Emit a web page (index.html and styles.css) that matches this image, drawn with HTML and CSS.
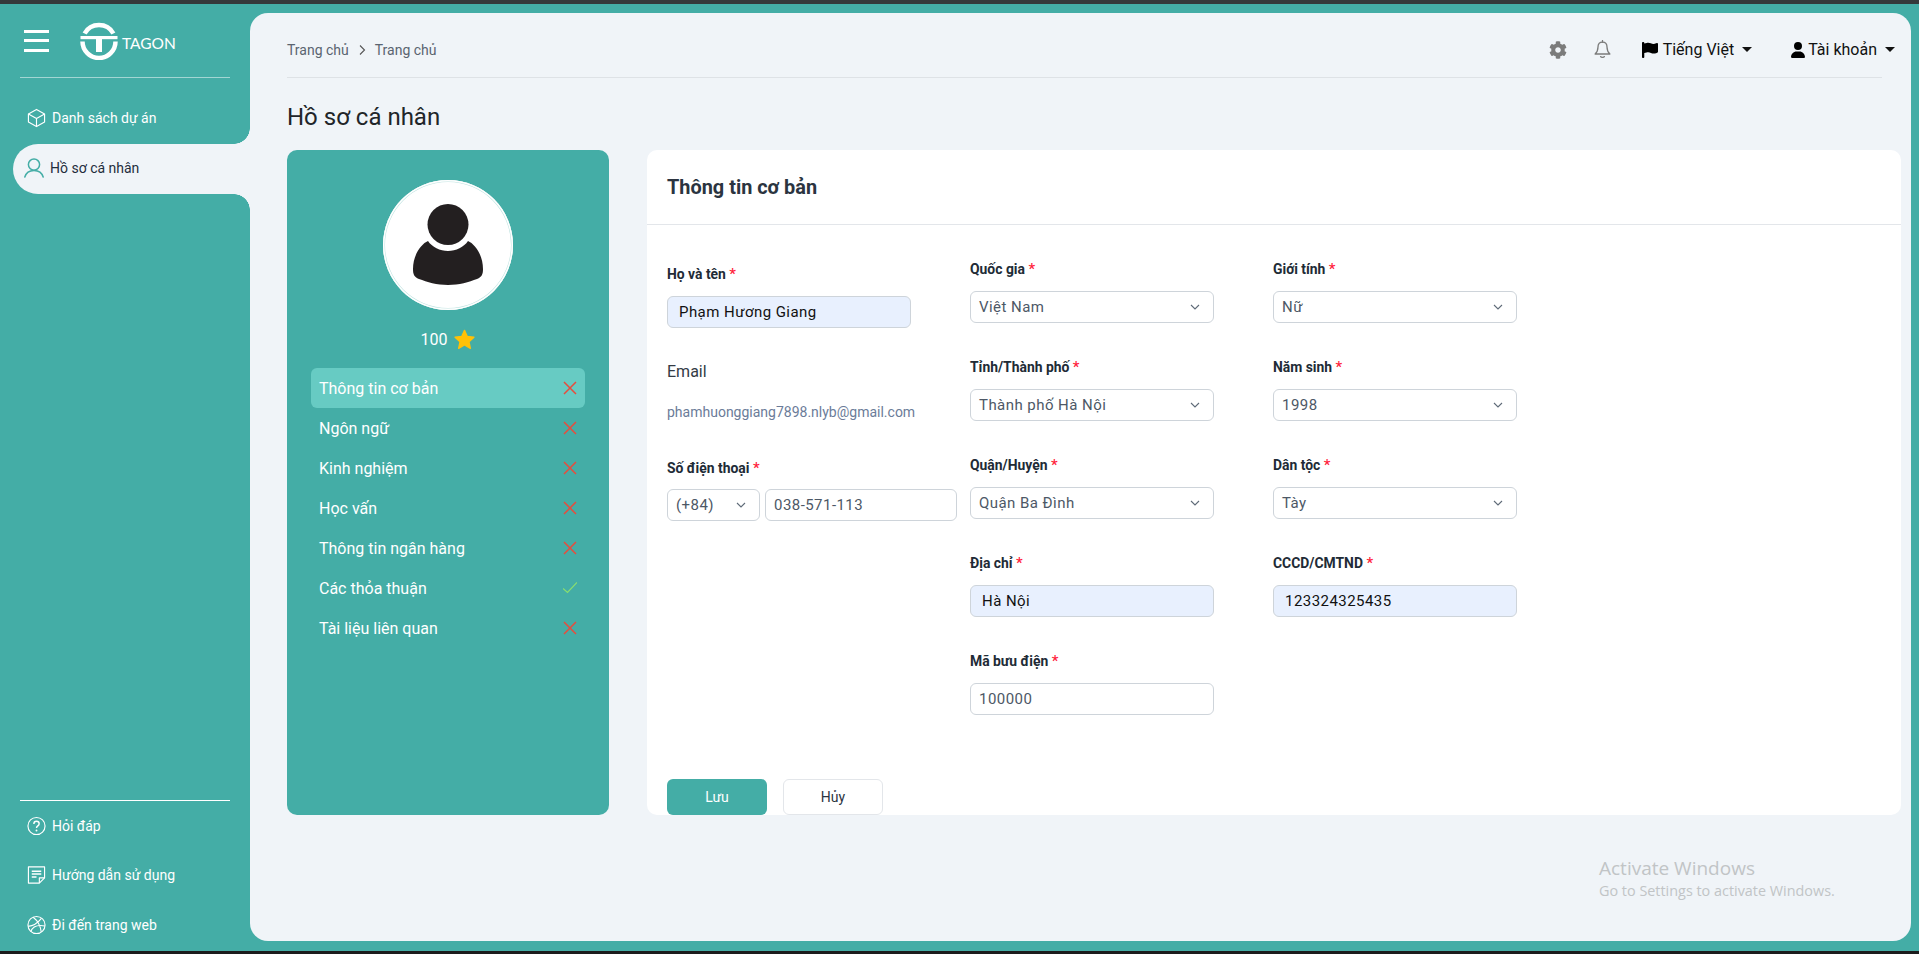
FILE: index.html
```html
<!DOCTYPE html>
<html lang="en">
<head>
    <meta charset="UTF-8">
    <meta name="viewport" content="width=device-width, initial-scale=1.0">
    <title>Hồ sơ cá nhân</title>
    <link rel="stylesheet" href="styles.css">
</head>
<body>
    <div class="app">
        <aside class="sidebar">
            <div class="brand">
                <div class="hamburger"><span></span><span></span><span></span></div>
                <svg class="logo" viewBox="0 0 38 38">
                    <path d="M4.6 11.500A16.500 16.500 0 0 1 33.400 11.500" fill="none" stroke="#fff" stroke-width="4.500"/>
                    <path d="M2.500 19.500A16.500 16.500 0 0 0 35.500 19.500" fill="none" stroke="#fff" stroke-width="4.500"/>
                    <rect x="0.500" y="14" width="37" height="3.200" fill="#fff"/>
                    <rect x="16" y="14" width="6" height="16" fill="#fff"/>
                </svg>
                <span class="logo-text">TAGON</span>
            </div>
            <nav class="nav">
                <a class="nav-item">
                    <svg class="nav-icon" viewBox="0 0 20 20" fill="none" stroke="#fff" stroke-width="1.200" stroke-linejoin="round"><path d="M10 1l8.500 4.800v8.400L10 19l-8.500-4.800V5.800z"/><path d="M1.500 5.800L10 10.500l8.500-4.700M10 10.500V19"/></svg>
                    Danh sách dự án
                </a>
                <a class="nav-item active">
                    <svg class="nav-icon" viewBox="0 0 20 20" fill="none" stroke="#44ada6" stroke-width="1.500" stroke-linecap="round"><circle cx="10" cy="6.600" r="5.600"/><path d="M.8 19c1.200-4.200 4.600-6.600 9.200-6.600s8 2.400 9.200 6.600"/></svg>
                    Hồ sơ cá nhân
                </a>
            </nav>
            <div class="nav-bottom">
                <a class="nav-item small">
                    <svg class="nav-icon" viewBox="0 0 20 20" fill="none" stroke="#fff" stroke-width="1.200"><circle cx="10" cy="10" r="9"/><path d="M7.200 7.800c0-1.700 1.200-2.800 2.800-2.800s2.800 1 2.800 2.600c0 2.300-2.800 2.300-2.800 4.600" stroke-width="1.500"/><circle cx="10" cy="14.800" r="1" fill="#fff" stroke="none"/></svg>
                    Hỏi đáp
                </a>
                <a class="nav-item small">
                    <svg class="nav-icon" viewBox="0 0 20 20" fill="none" stroke="#fff" stroke-width="1.200" stroke-linejoin="round"><path d="M1.500 1.500h17v11.500l-5.500 5.500H1.500z"/><path d="M18.500 13H13v5.500"/><path d="M5 6h10M5 9h10M5 12h5" stroke-width="1.600"/></svg>
                    Hướng dẫn sử dụng
                </a>
                <a class="nav-item small">
                    <svg class="nav-icon" viewBox="0 0 20 20" fill="none" stroke="#fff" stroke-width="1.200"><circle cx="10" cy="10" r="9"/><path d="M6.500 1.800c4 3 7.500 8 8.500 15.500M1.200 11.500c5-.5 10-3.500 14-8.500M4 17c1.500-4.500 6-7.500 14.800-6"/></svg>
                    Đi đến trang web
                </a>
            </div>
        </aside>

        <main class="main">
            <header class="topbar">
                <div class="breadcrumb">
                    <span>Trang chủ</span>
                    <svg class="crumb-sep" viewBox="0 0 8 12" fill="none" stroke="#555" stroke-width="1.100"><path d="M2 1.500L6.500 6 2 10.500"/></svg>
                    <span>Trang chủ</span>
                </div>
                <div class="top-actions">
                    <svg class="ic-gear" viewBox="0 0 512 512" fill="#7b7b7b"><path d="M487.4 315.7l-42.6-24.6c4.3-23.2 4.3-47 0-70.2l42.6-24.6c4.9-2.8 7.1-8.6 5.5-14-11.1-35.6-30-67.8-54.7-94.6-3.8-4.1-10-5.1-14.8-2.3L380.8 110c-17.9-15.4-38.5-27.3-60.8-35.1V25.8c0-5.6-3.9-10.5-9.4-11.7-36.7-8.2-74.3-7.8-109.2 0-5.5 1.2-9.4 6.1-9.4 11.7V75c-22.2 7.9-42.8 19.8-60.8 35.1L88.7 85.5c-4.9-2.8-11-1.9-14.8 2.3-24.7 26.7-43.6 58.9-54.7 94.6-1.7 5.4.6 11.2 5.5 14L67.3 221c-4.3 23.2-4.3 47 0 70.2l-42.6 24.6c-4.9 2.8-7.1 8.6-5.5 14 11.1 35.6 30 67.8 54.7 94.6 3.8 4.1 10 5.1 14.8 2.3l42.6-24.6c17.9 15.4 38.5 27.3 60.8 35.1v49.2c0 5.6 3.9 10.5 9.4 11.7 36.7 8.2 74.3 7.8 109.2 0 5.5-1.2 9.4-6.1 9.4-11.7v-49.2c22.2-7.9 42.8-19.8 60.8-35.1l42.6 24.6c4.9 2.8 11 1.9 14.8-2.3 24.7-26.7 43.6-58.9 54.7-94.6 1.5-5.5-.7-11.3-5.6-14.1zM256 336c-44.1 0-80-35.9-80-80s35.9-80 80-80 80 35.9 80 80-35.9 80-80 80z"/></svg>
                    <svg class="ic-bell" viewBox="0 0 18 20" fill="none" stroke="#7b7b7b" stroke-width="1.400" stroke-linejoin="round"><path d="M9 2.200c-3.200 0-4.800 2.400-4.800 5.300 0 3.800-1.200 5.600-3 7.300h15.600c-1.800-1.700-3-3.500-3-7.300 0-2.900-1.600-5.300-4.800-5.300z"/><path d="M9 .5v1.700M7 17.500c.5 1.200 3.500 1.200 4 0" stroke-linecap="round"/></svg>
                    <div class="top-menu lang">
                        <svg class="ic-flag" viewBox="0 0 448 512" preserveAspectRatio="none"><path d="M64 32C64 14.300 49.700 0 32 0S0 14.300 0 32V64 368 480c0 17.700 14.300 32 32 32s32-14.300 32-32V352l64.300-16.100c41.100-10.300 84.600-5.500 122.500 13.400c44.200 22.100 95.500 24.800 141.700 7.400l34.700-13c12.500-4.700 20.800-16.600 20.800-30V66.100c0-23-24.200-38-44.800-27.700l-9.600 4.800c-46.300 23.200-100.800 23.200-147.100 0c-35.100-17.600-75.400-22-113.500-12.500L64 48V32z"/></svg>
                        <span>Tiếng Việt</span>
                        <i class="caret"></i>
                    </div>
                    <div class="top-menu account">
                        <svg class="ic-user" viewBox="0 0 448 512"><path d="M224 256A128 128 0 1 0 224 0a128 128 0 1 0 0 256zm-45.700 48C79.800 304 0 383.800 0 482.300C0 498.700 13.300 512 29.700 512H418.300c16.400 0 29.700-13.300 29.700-29.700C448 383.800 368.200 304 269.700 304H178.300z"/></svg>
                        <span>Tài khoản</span>
                        <i class="caret"></i>
                    </div>
                </div>
            </header>

            <h1 class="page-title">Hồ sơ cá nhân</h1>

            <div class="content">
                <section class="profile-card">
                    <div class="avatar">
                        <svg viewBox="0 0 70 82" class="avatar-img">
                            <circle cx="35" cy="20.500" r="20.500" fill="#231f20"/>
                            <path d="M15 37c4 6 12 10 20 10s16-4 20-10c7 3 15 14 15 28 0 5-1 8-6 10-8 3-18 6-29 6s-21-3-29-6c-5-2-6-5-6-10C0 51 8 40 15 37z" fill="#231f20"/>
                        </svg>
                    </div>
                    <div class="score">
                        <span>100</span>
                        <svg class="star" viewBox="0 0 24 24"><path d="M12 1.500l3.200 7 7.600.9-5.600 5.200 1.500 7.500L12 18.300l-6.700 3.800 1.500-7.500L1.200 9.400l7.600-.9z" fill="#ffc107" stroke="#ffc107" stroke-width="1.500" stroke-linejoin="round"/></svg>
                    </div>
                    <ul class="steps">
                        <li class="step current">Thông tin cơ bản <svg class="mark" viewBox="0 0 14 14"><path d="M1 1l12 12M13 1L1 13"/></svg></li>
                        <li class="step">Ngôn ngữ <svg class="mark" viewBox="0 0 14 14"><path d="M1 1l12 12M13 1L1 13"/></svg></li>
                        <li class="step">Kinh nghiệm <svg class="mark" viewBox="0 0 14 14"><path d="M1 1l12 12M13 1L1 13"/></svg></li>
                        <li class="step">Học vấn <svg class="mark" viewBox="0 0 14 14"><path d="M1 1l12 12M13 1L1 13"/></svg></li>
                        <li class="step">Thông tin ngân hàng <svg class="mark" viewBox="0 0 14 14"><path d="M1 1l12 12M13 1L1 13"/></svg></li>
                        <li class="step">Các thỏa thuận <svg class="mark ok" viewBox="0 0 14 14"><path d="M0 7.500l4.500 4L14 1.500"/></svg></li>
                        <li class="step">Tài liệu liên quan <svg class="mark" viewBox="0 0 14 14"><path d="M1 1l12 12M13 1L1 13"/></svg></li>
                    </ul>
                </section>

                <section class="form-card">
                    <h2 class="form-title">Thông tin cơ bản</h2>
                    <div class="form-body">
                        <div class="form-cols">
                            <div class="form-col first">
                                <div class="name-field">
                                    <label class="field-label">Họ và tên <b>*</b></label>
                                    <input class="input filled wide" value="Phạm Hương Giang">
                                </div>
                                <div class="email-label">Email</div>
                                <div class="email-value">phamhuonggiang7898.nlyb@gmail.com</div>
                                <label class="field-label tight">Số điện thoại <b>*</b></label>
                                <div class="phone-row">
                                    <div class="select code"><span>(+84)</span><svg class="chev" viewBox="0 0 10 6"><path d="M1 1l4 4 4-4"/></svg></div>
                                    <input class="input phone" value="038-571-113">
                                </div>
                            </div>
                            <div class="form-col">
                                <div class="field">
                                    <label class="field-label">Quốc gia <b>*</b></label>
                                    <div class="select"><span>Việt Nam</span><svg class="chev" viewBox="0 0 10 6"><path d="M1 1l4 4 4-4"/></svg></div>
                                </div>
                                <div class="field">
                                    <label class="field-label">Tỉnh/Thành phố <b>*</b></label>
                                    <div class="select"><span>Thành phố Hà Nội</span><svg class="chev" viewBox="0 0 10 6"><path d="M1 1l4 4 4-4"/></svg></div>
                                </div>
                                <div class="field">
                                    <label class="field-label">Quận/Huyện <b>*</b></label>
                                    <div class="select"><span>Quận Ba Đình</span><svg class="chev" viewBox="0 0 10 6"><path d="M1 1l4 4 4-4"/></svg></div>
                                </div>
                                <div class="field">
                                    <label class="field-label">Địa chỉ <b>*</b></label>
                                    <input class="input filled" value="Hà Nội">
                                </div>
                                <div class="field">
                                    <label class="field-label">Mã bưu điện <b>*</b></label>
                                    <input class="input" value="100000">
                                </div>
                            </div>
                            <div class="form-col">
                                <div class="field">
                                    <label class="field-label">Giới tính <b>*</b></label>
                                    <div class="select"><span>Nữ</span><svg class="chev" viewBox="0 0 10 6"><path d="M1 1l4 4 4-4"/></svg></div>
                                </div>
                                <div class="field">
                                    <label class="field-label">Năm sinh <b>*</b></label>
                                    <div class="select"><span>1998</span><svg class="chev" viewBox="0 0 10 6"><path d="M1 1l4 4 4-4"/></svg></div>
                                </div>
                                <div class="field">
                                    <label class="field-label">Dân tộc <b>*</b></label>
                                    <div class="select"><span>Tày</span><svg class="chev" viewBox="0 0 10 6"><path d="M1 1l4 4 4-4"/></svg></div>
                                </div>
                                <div class="field">
                                    <label class="field-label">CCCD/CMTND <b>*</b></label>
                                    <input class="input filled" value="123324325435">
                                </div>
                            </div>
                        </div>
                        <div class="form-actions">
                            <button type="button" class="btn btn-save">Lưu</button>
                            <button type="button" class="btn btn-cancel">Hủy</button>
                        </div>
                    </div>
                </section>
            </div>

            <div class="watermark">
                <div class="wm-title">Activate Windows</div>
                <div class="wm-sub">Go to Settings to activate Windows.</div>
            </div>
        </main>
    </div>
</body>
</html>
```

FILE: styles.css
```css
* {
    box-sizing: border-box;
}
html, body {
    height: 100%;
}
body {
    margin: 0;
    background-color: #1c1c1c;
    border-top: 4px solid #35393b;
    font-family: Roboto, "Liberation Sans", sans-serif;
    overflow: hidden;
}
.app {
    display: flex;
    height: 947px;
    background-color: #44ada6;
}

/* sidebar */
.sidebar {
    width: 250px;
    flex-shrink: 0;
    display: flex;
    flex-direction: column;
}
.brand {
    height: 74px;
    margin: 0 20px;
    padding-left: 4px;
    border-bottom: 1px solid rgba(255, 255, 255, 0.5);
    display: flex;
    align-items: center;
}
.hamburger {
    width: 25px;
    height: 22px;
    margin-right: 31px;
    display: flex;
    flex-direction: column;
    justify-content: space-between;
}
.hamburger span {
    display: block;
    height: 3px;
    background-color: #fff;
}
.logo {
    width: 38px;
    height: 38px;
}
.logo-text {
    margin-left: 4px;
    margin-top: 4px;
    color: #fff;
    font-family: Lato, sans-serif;
    font-size: 15.5px;
    font-weight: 400;
}
.nav {
    margin-top: 16px;
}
.nav-item {
    height: 50px;
    padding-left: 27px;
    display: flex;
    align-items: center;
    color: #fff;
    font-size: 14px;
    white-space: nowrap;
}
.nav .nav-item {
    padding-bottom: 2px;
}
.nav-icon {
    width: 19px;
    height: 20px;
    margin-right: 6px;
    flex-shrink: 0;
}
.nav-item.active {
    position: relative;
    margin-left: 13px;
    padding-left: 11px;
    background-color: #f0f4f8;
    border-radius: 25px 0 0 25px;
    color: #1f2d3d;
}
.nav-item.active .nav-icon {
    width: 20px;
}
.nav-item.active::before,
.nav-item.active::after {
    content: "";
    position: absolute;
    right: 0;
    width: 16px;
    height: 16px;
}
.nav-item.active::before {
    top: -16px;
    background: radial-gradient(circle at 0 0, #44ada6 15.5px, #f0f4f8 16px);
}
.nav-item.active::after {
    bottom: -16px;
    background: radial-gradient(circle at 0 100%, #44ada6 15.5px, #f0f4f8 16px);
}
.nav-bottom {
    margin: auto 20px 0;
    padding-bottom: 1px;
    border-top: 1px solid #fff;
}
.nav-item.small {
    padding-left: 7px;
}
.nav-item.small:first-child {
    height: 49px;
}

/* main panel */
.main {
    position: relative;
    flex: 1;
    margin: 9px 8px 10px 0;
    padding: 0 10px 0 37px;
    background-color: #f0f4f8;
    border-radius: 18px;
}
.topbar {
    height: 65px;
    margin-right: 19px;
    padding-top: 9px;
    border-bottom: 1px solid #dee2e6;
    display: flex;
    align-items: center;
    justify-content: space-between;
}
.breadcrumb {
    display: flex;
    align-items: center;
    gap: 9px;
    color: #5a6470;
    font-size: 14px;
}
.crumb-sep {
    width: 8px;
    height: 12px;
}
.top-actions {
    display: flex;
    align-items: center;
    margin-right: -13px;
    color: #111;
    font-size: 16px;
}
.ic-gear {
    width: 18px;
    height: 18px;
    margin-right: 27px;
}
.ic-bell {
    width: 17px;
    height: 19px;
    margin-right: 31px;
}
.top-menu {
    display: flex;
    align-items: center;
}
.lang {
    margin-right: 39px;
}
.ic-flag {
    width: 16px;
    height: 16px;
    margin-right: 5px;
}
.ic-user {
    width: 14px;
    height: 16px;
    margin-right: 3px;
}
.caret {
    display: block;
    margin-left: 8px;
    border-top: 5px solid #111;
    border-left: 5px solid transparent;
    border-right: 5px solid transparent;
}
.page-title {
    height: 72px;
    margin: 0;
    padding-top: 5px;
    display: flex;
    align-items: center;
    color: #212529;
    font-size: 24px;
    font-weight: 400;
}
.content {
    display: flex;
    gap: 38px;
    height: 665px;
}

/* left card */
.profile-card {
    width: 322px;
    flex-shrink: 0;
    padding: 30px 24px 0;
    background-color: #44ada6;
    border-radius: 10px;
}
.avatar {
    width: 130px;
    height: 130px;
    margin: 0 auto;
    display: flex;
    align-items: center;
    justify-content: center;
    background-color: #fff;
    border-radius: 50%;
    box-shadow: inset 0 0 0 1.5px #fff, inset 0 0 0 2px #bfe3e0;
}
.avatar-img {
    width: 70px;
    height: 82px;
}
.score {
    height: 24px;
    margin-top: 17px;
    display: flex;
    align-items: center;
    justify-content: center;
    gap: 7px;
    color: #fff;
    font-size: 16px;
}
.star {
    width: 21px;
    height: 21px;
}
.steps {
    list-style: none;
    margin: 17px 0 0;
    padding: 0;
}
.step {
    height: 40px;
    padding: 0 8px;
    display: flex;
    align-items: center;
    justify-content: space-between;
    color: #fff;
    font-size: 16px;
    border-radius: 6px;
}
.step.current {
    background-color: #67cbc3;
}
.mark {
    width: 14px;
    height: 14px;
    fill: none;
    stroke: #e74c3c;
    stroke-width: 1.5;
}
.mark.ok {
    stroke: #8ade6f;
    stroke-width: 1.2;
}

/* right card */
.form-card {
    flex: 1;
    background-color: #fff;
    border-radius: 10px;
    overflow: hidden;
}
.form-title {
    height: 75px;
    margin: 0;
    padding-left: 20px;
    display: flex;
    align-items: center;
    border-bottom: 1px solid #e3e6ea;
    color: #2b3440;
    font-size: 19.9px;
    font-weight: 700;
}
.form-body {
    padding: 33px 20px 0;
}
.form-cols {
    display: flex;
}
.form-col {
    width: 303px;
}
.form-col.first {
    padding-top: 5px;
}
.field-label {
    display: block;
    height: 22px;
    margin-bottom: 11px;
    color: #212b36;
    font-size: 13.9px;
    font-weight: 700;
    line-height: 22px;
}
.field-label.tight {
    margin-bottom: 10px;
}
.field-label b {
    color: #ff1f3d;
    font-size: 15px;
    font-weight: 500;
}
.field {
    width: 244px;
    margin-bottom: 33px;
}
.input, .select {
    display: block;
    width: 100%;
    min-width: 0;
    height: 32px;
    padding: 0 8px;
    background-color: #fff;
    border: 1px solid #ced4da;
    border-radius: 6px;
    color: #4d5866;
    font-family: Roboto, sans-serif;
    font-size: 15px;
    letter-spacing: 0.45px;
    outline: none;
}
.select {
    display: flex;
    align-items: center;
    justify-content: space-between;
}
.input.filled {
    padding: 0 11px;
    background-color: #e8f0fe;
    color: #111;
}
.input.wide {
    width: 244px;
}
.chev {
    width: 10px;
    height: 6px;
    margin-right: 5px;
    fill: none;
    stroke: #5f6b78;
    stroke-width: 1.1;
}
.name-field {
    margin-bottom: 33px;
}
.email-label {
    height: 22px;
    margin-bottom: 18px;
    color: #333b45;
    font-size: 16px;
    line-height: 22px;
}
.email-value {
    height: 22px;
    margin-bottom: 34px;
    color: #6b7c99;
    font-size: 14px;
    line-height: 22px;
}
.phone-row {
    width: 290px;
    display: flex;
    gap: 5px;
}
.select.code {
    width: 93px;
    flex-shrink: 0;
}
.input.phone {
    flex: 1;
    width: auto;
}
.form-actions {
    margin-top: 31px;
    display: flex;
    gap: 16px;
}
.btn {
    width: 100px;
    height: 36px;
    font-family: Roboto, sans-serif;
    font-size: 14px;
    border-radius: 6px;
    cursor: pointer;
}
.btn-save {
    background-color: #44ada6;
    border: none;
    color: #fff;
}
.btn-cancel {
    background-color: #fff;
    border: 1px solid #e3e6ea;
    color: #2b3440;
}

/* windows overlay */
.watermark {
    position: absolute;
    left: 1349px;
    top: 842px;
    color: #c1c4c6;
    font-family: "Open Sans", sans-serif;
    white-space: nowrap;
}
.wm-title {
    font-size: 19px;
    line-height: 26px;
}
.wm-sub {
    font-size: 14.4px;
    line-height: 20px;
}
```
